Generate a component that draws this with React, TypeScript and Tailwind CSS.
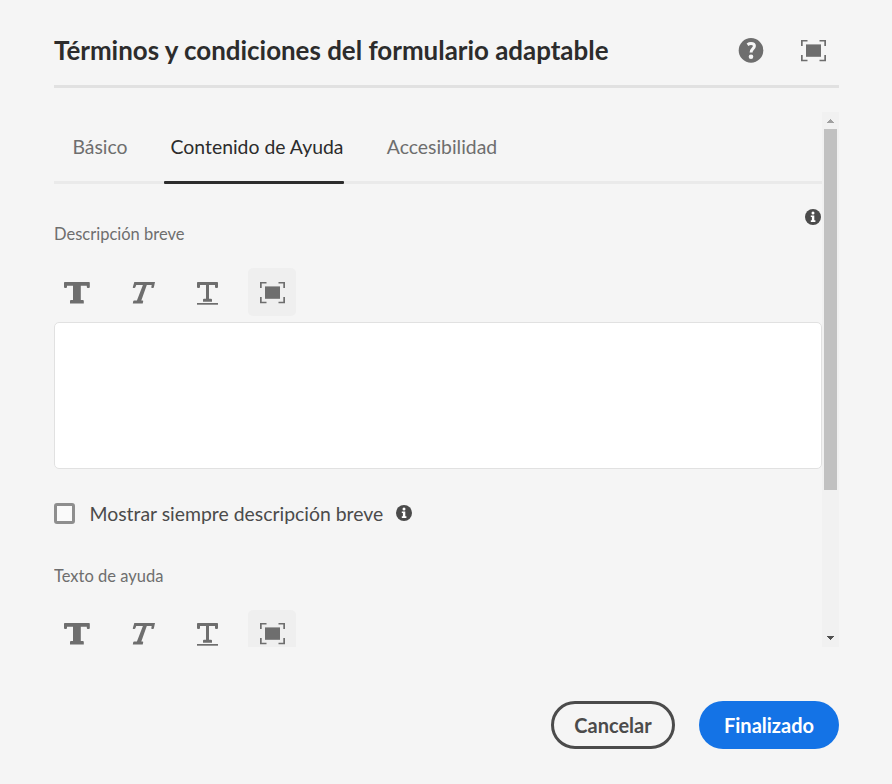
import type { ReactNode } from 'react';

function Icon({ children, className = 'size-12' }: { children: ReactNode; className?: string }) {
  return (
    <svg viewBox="0 0 48 48" className={'block shrink-0 ' + className} fill="currentColor" aria-hidden="true">
      {children}
    </svg>
  );
}

function BoldIcon() {
  return (
    <Icon>
      <path d="M11.8 14h24.2q.8 0 .8.8V19q0 1-1 1h-1q-1 0-1-1v-1.300h-6V32h2q1 0 1 1v2.400H17V33q0-1 1-1h2V17.700h-6V19q0 1-1 1h-1q-1 0-1-1v-4.200q0-.8.8-.8z" />
    </Icon>
  );
}

function ItalicIcon() {
  return (
    <Icon>
      <path d="M16.300 14H37l-1.100 5.200q-.2.800-.9.800h-1q-.8 0-.7-.8l.4-2.200h-4.900L23.300 32.500h1.200q.9 0 .7.800l-.5 2.100h-9.900l.4-2.100q.2-.8 1-.8h2.700L24.900 17h-6.700l-.8 2.200q-.3.800-1.100.8h-.9q-.8 0-.6-.8z" />
    </Icon>
  );
}

function UnderlineIcon() {
  return (
    <Icon>
      <path d="M14.800 14h19.400q.8 0 .8.800V19q0 1-1 1h-1q-1 0-1-1v-2h-6v13.700h2q1 0 1 1v2h-9v-2q0-1 1-1h2V17h-6v2q0 1-1 1h-1q-1 0-1-1v-4.200q0-.8.8-.8z" />
      <path d="M14 35h21v1.700H14z" />
    </Icon>
  );
}

function FullscreenIcon({ className }: { className?: string }) {
  return (
    <Icon className={className}>
      <path d="M12 14h6.500v1.500h-4.800V20H12zM37 14h-6.500v1.500h4.800V20H37zM12 35.300h6.500v-1.500h-4.800v-4.700H12zM37 35.300h-6.500v-1.500h4.800v-4.700H37z" />
      <path d="M17 18.400h15v12.400H17z" />
    </Icon>
  );
}

function InfoIcon() {
  return (
    <svg viewBox="0 0 16 16" className="block size-4 shrink-0" aria-hidden="true">
      <circle cx="8" cy="8" r="8" fill="#4b4b4b" />
      <circle cx="8" cy="3.900" r="1.500" fill="#fff" />
      <path d="M5.800 6.400h3.500v4.900h1.100V13H5.800v-1.700h1.100V8H5.800z" fill="#fff" />
    </svg>
  );
}

function HelpIcon() {
  return (
    <svg viewBox="0 0 26 26" className="block size-[26px]" aria-hidden="true">
      <circle cx="13" cy="13.400" r="12.300" fill="#6e6e6e" />
      <path d="M9.500 7.700q1.700-1.200 3.500-1.200c2.300 0 3.400 1 3.400 2.600 0 1.300-.7 2.100-1.800 3-1 .9-1.500 1.700-1.500 3.500" fill="none" stroke="#f5f5f5" strokeWidth="3" />
      <circle cx="13" cy="19.700" r="2.300" fill="#f5f5f5" />
    </svg>
  );
}

function Toolbar({ className = '' }: { className?: string }) {
  return (
    <div className={'-ml-px flex gap-[17px] text-[#6e6e6e] ' + className}>
      <button aria-label="Negrita"><BoldIcon /></button>
      <button aria-label="Cursiva"><ItalicIcon /></button>
      <button aria-label="Subrayado"><UnderlineIcon /></button>
      <button aria-label="Pantalla completa" className="rounded-[5px] bg-[#efefef]"><FullscreenIcon /></button>
    </div>
  );
}

function ScrollBar() {
  return (
    <div className="flex w-[17px] shrink-0 flex-col items-center bg-[#f1f1f1]">
      <div className="flex h-[17px] w-full items-center justify-center">
        <svg viewBox="0 0 7 4" className="mt-px h-1 w-[7px]" shapeRendering="crispEdges">
          <path d="M3 0h1v1h1v1h1v1h1v1H0V3h1V2h1V1h1z" fill="#a0a0a0" />
        </svg>
      </div>
      <div className="h-[361px] w-[13px] bg-[#c1c1c1]" />
      <div className="grow" />
      <div className="flex h-[17px] w-full justify-center pt-1.5">
        <svg viewBox="0 0 7 4" className="h-1 w-[7px]" shapeRendering="crispEdges">
          <path d="M0 0h7v1H6v1H5v1H4v1H3V3H2V2H1V1H0z" fill="#505050" />
        </svg>
      </div>
    </div>
  );
}

export default function App() {
  return (
    <div className="flex h-[784px] w-[892px] flex-col bg-[#f5f5f5] pr-[53px] pl-[54px] font-[Lato,sans-serif]">
      <header className="flex h-[88px] shrink-0 items-start justify-between border-b-[3px] border-[#e1e1e1]">
        <h1 className="mt-[34px] text-[25.920px] leading-8 font-bold whitespace-nowrap text-[#2c2c2c]">
          Términos y condiciones del formulario adaptable
        </h1>
        <div className="mr-0.5 flex text-[#6e6e6e]">
          <button aria-label="Ayuda" className="mt-[37px] mr-[25px] h-[26px]"><HelpIcon /></button>
          <button aria-label="Pantalla completa" className="mt-[26px]"><FullscreenIcon className="size-12" /></button>
        </div>
      </header>

      <main className="mt-6 flex h-[535px] shrink-0">
        <div className="w-[768px] overflow-hidden">
          <nav className="flex h-[72px] border-b-[3px] border-[#eaeaea] text-[19.400px] leading-6 text-[#6e6e6e]">
            <button className="ml-[18px] flex h-[72px] w-[56px] justify-center pt-[23px] whitespace-nowrap">Básico</button>
            <button className="ml-[35.500px] flex h-[72px] w-[180px] shrink-0 flex-col items-center justify-between pt-[23px] whitespace-nowrap text-[#2c2c2c]">
              <span className="pl-[7px]">Contenido de Ayuda</span>
              <span className="h-[3px] w-full rounded-[1px] bg-[#2c2c2c]" />
            </button>
            <button className="ml-[42.500px] flex h-[72px] w-[112px] justify-center pt-[23px] whitespace-nowrap">Accesibilidad</button>
          </nav>

          <div className="flex h-[84px] items-start justify-between">
            <label className="mt-[38px] text-[16.500px] leading-6 text-[#6e6e6e]">Descripción breve</label>
            <div className="mt-[25px] mr-px"><InfoIcon /></div>
          </div>
          <Toolbar />
          <div className="mt-[6px] h-[147px] rounded-[5px] border border-[#e1e1e1] bg-white" />

          <div className="mt-8 flex h-[25px] items-center">
            <span className="size-[21px] rounded-[3px] border-[3px] border-[#8e8e8e] bg-[#fafafa]" />
            <span className="ml-[14.500px] text-[19.400px] leading-6 whitespace-nowrap text-[#4b4b4b]">Mostrar siempre descripción breve</span>
            <span className="mb-px ml-[13px]"><InfoIcon /></span>
          </div>

          <div className="mt-[38px] h-[46px] text-[16.500px] leading-6 text-[#6e6e6e]">Texto de ayuda</div>
          <Toolbar className="[&_svg]:-mt-px" />
        </div>
        <ScrollBar />
      </main>

      <footer className="mt-[54px] flex justify-end gap-6 text-xl leading-6 font-bold">
        <button className="flex h-12 w-[124px] items-center justify-center rounded-full border-[3px] border-[#4b4b4b] pb-px text-[#4b4b4b]">Cancelar</button>
        <button className="flex h-12 w-[140px] items-center justify-center rounded-full bg-[#1473e6] pb-px text-white">Finalizado</button>
      </footer>
    </div>
  );
}
